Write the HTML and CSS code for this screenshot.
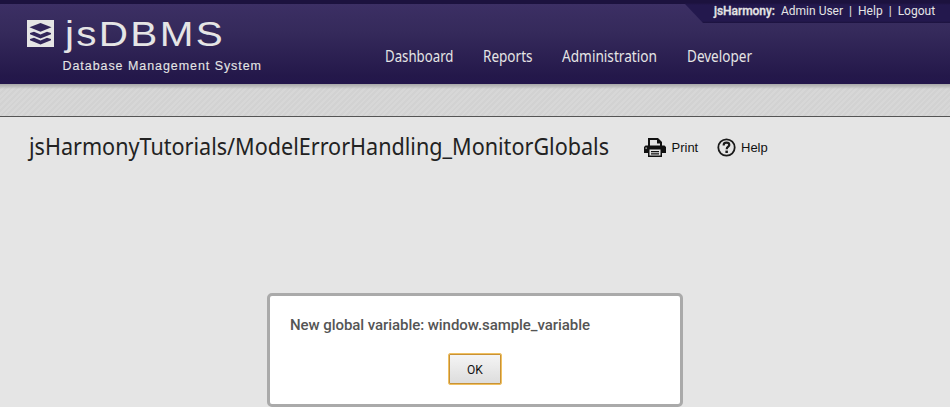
FILE: index.html
```html
<!DOCTYPE html>
<html lang="en">
<head>
<meta charset="utf-8">
<title>jsDBMS</title>
<link rel="stylesheet" href="styles.css">
</head>
<body>
<header class="header">
  <svg class="logo" width="240" height="64" viewBox="25 16 240 64">
    <path class="mark" d="M27 20h27v27H27z"/>
    <g class="layers">
      <path d="M40.500 23l11 4.200-11 4.600-11-4.600z"/>
      <path d="M30 33l4-1.300 6.500 2.800 6.500-2.800 4 1.300v1.200L40.500 38.500 30 34.200z"/>
      <path d="M30 39l4-1.300 6.500 2.800 6.500-2.800 4 1.300v1.200L40.500 44.500 30 40.200z"/>
    </g>
    <text class="brand" x="65" y="46" textLength="160" lengthAdjust="spacingAndGlyphs">jsDBMS</text>
    <text class="tagline" x="62.500" y="70" textLength="198.500" lengthAdjust="spacing">Database Management System</text>
  </svg>
  <nav class="nav">
    <svg width="70" height="24"><text x="0" y="17" textLength="68.500" lengthAdjust="spacingAndGlyphs">Dashboard</text></svg>
    <svg width="51" height="24"><text x="0" y="17" textLength="49.500" lengthAdjust="spacingAndGlyphs">Reports</text></svg>
    <svg width="96" height="24"><text x="0" y="17" textLength="95" lengthAdjust="spacingAndGlyphs">Administration</text></svg>
    <svg width="67" height="24"><text x="0" y="17" textLength="65" lengthAdjust="spacingAndGlyphs">Developer</text></svg>
  </nav>
  <div class="user">
    <b>jsHarmony:</b><span>Admin User</span><i>|</i><span>Help</span><i>|</i><span>Logout</span>
  </div>
</header>
<div class="strip"></div>
<main class="page">
  <svg class="title" width="584" height="36"><text x="0" y="26" textLength="580" lengthAdjust="spacingAndGlyphs">jsHarmonyTutorials/ModelErrorHandling_MonitorGlobals</text></svg>
  <div class="tool print">
    <svg width="22" height="20" viewBox="0 0 22 20">
      <path fill="#111" d="M4 0h10l4 4v3.500h2.500L22 9v6h-4v4H4v-4H0V9l1.500-1.500H4z"/>
      <path fill="#e5e5e5" d="M6 2h7v3.500h3v2H6zM5.500 11.500h11v6h-11z"/>
      <path fill="#111" d="M7 13h8v1.200H7zM7 15.300h8v1.200H7z"/>
      <path fill="#e5e5e5" d="M1.500 9.500h1.300v1.200H1.500z"/>
    </svg>
    <span>Print</span>
  </div>
  <div class="tool help">
    <svg width="19" height="19" viewBox="0 0 19 19">
      <circle cx="9.500" cy="9.500" r="8.200" fill="none" stroke="#1a1a1a" stroke-width="1.800"/>
      <path d="M6.700 7.600V7a2.800 2.300 0 0 1 5.600 0c0 1.700-2.600 1.800-2.600 4.200" fill="none" stroke="#1a1a1a" stroke-width="2.200"/>
      <path fill="#1a1a1a" d="M8.400 12.600h2.500V15H8.400z"/>
    </svg>
    <span>Help</span>
  </div>
</main>
<div class="dialog" role="alertdialog">
  <p>New global variable: window.sample_variable</p>
  <button class="ok">OK</button>
</div>
</body>
</html>
```
FILE: styles.css
```css
* { box-sizing: border-box; }
body {
  margin: 0;
  height: 407px;
  overflow: hidden;
  background: #e5e5e5;
  font-family: Roboto, "Liberation Sans", sans-serif;
}
svg { display: block; flex: none; overflow: visible; }
.header {
  position: relative;
  display: flex;
  height: 84px;
  padding: 12px 0 0 25px;
  border-top: 4px solid #1c123e;
  background: linear-gradient(#3c2f64, #352a5b 35%, #24184a 90%, #23164b);
}
.mark { fill: #e5e5e5; }
.layers { fill: #32265a; }
.brand {
  font: 35px "Liberation Sans", sans-serif;
  letter-spacing: 2px;
  fill: #e5e5e5;
}
.tagline {
  font: 12.5px "Liberation Sans", sans-serif;
  fill: #e5e5e5;
  stroke: #e5e5e5;
  stroke-width: .1px;
}
.nav {
  display: flex;
  gap: 28.2px;
  margin: 29px 0 0 120px;
  font: 16px "Noto Sans", sans-serif;
  fill: #e5e5e5;
}
.user {
  position: absolute;
  top: -4px;
  right: 0;
  display: flex;
  width: 265px;
  height: 23px;
  padding: 4px 0 0 29px;
  background: linear-gradient(#1c123e 3px, #23184d 5px, #23184d 21px, #1c123e);
  clip-path: polygon(0 4px, 0 0, 100% 0, 100% 100%, 18px 100%);
  color: #e5e5e5;
  font-size: 12px;
  line-height: 15px;
  white-space: nowrap;
}
.user b { width: 67px; font-weight: 500; letter-spacing: -.05px; -webkit-text-stroke: .3px; }
.user i { width: 15px; text-align: center; font-style: normal; }
.strip {
  height: 33px;
  border-bottom: 1px solid #555;
  background:
    linear-gradient(#a9a9a9, #b9b9b9 2px, rgba(212, 212, 212, 0) 5px),
    repeating-linear-gradient(135deg, #d7d7d7 0 2px, #d2d2d2 2px 4px);
}
.page { display: flex; align-items: flex-start; padding: 12px 0 0 29px; }
.title { font: 24px "Noto Sans", sans-serif; fill: #222; }
.tool {
  display: flex;
  align-items: center;
  height: 20px;
  font: 13px "Liberation Sans", sans-serif;
  color: #111;
}
.print { width: 73px; gap: 5.5px; margin: 9px 0 0 31px; }
.help { gap: 5px; margin-top: 8px; }
.print span { padding-bottom: 1.5px; }
.dialog {
  position: absolute;
  left: 267px;
  top: 293px;
  width: 416px;
  height: 114px;
  padding: 20px;
  border: 3px solid #aaa;
  border-radius: 5px;
  background: #fff;
}
.dialog p {
  margin: 0;
  color: #555;
  font-size: 15px;
  font-weight: 500;
  letter-spacing: -.06px;
  line-height: 18px;
  white-space: nowrap;
}
.ok {
  display: block;
  width: 54px;
  height: 32px;
  margin: 19px 0 0 158px;
  padding: 2px 0 0;
  border: 1px solid #f0c060;
  border-radius: 2px;
  outline: 0;
  box-shadow: inset 0 0 0 1px #c89236;
  background: linear-gradient(#f5f5f5, #dcdcdc);
  color: #111;
  font: 12px Roboto, sans-serif;
}
```
